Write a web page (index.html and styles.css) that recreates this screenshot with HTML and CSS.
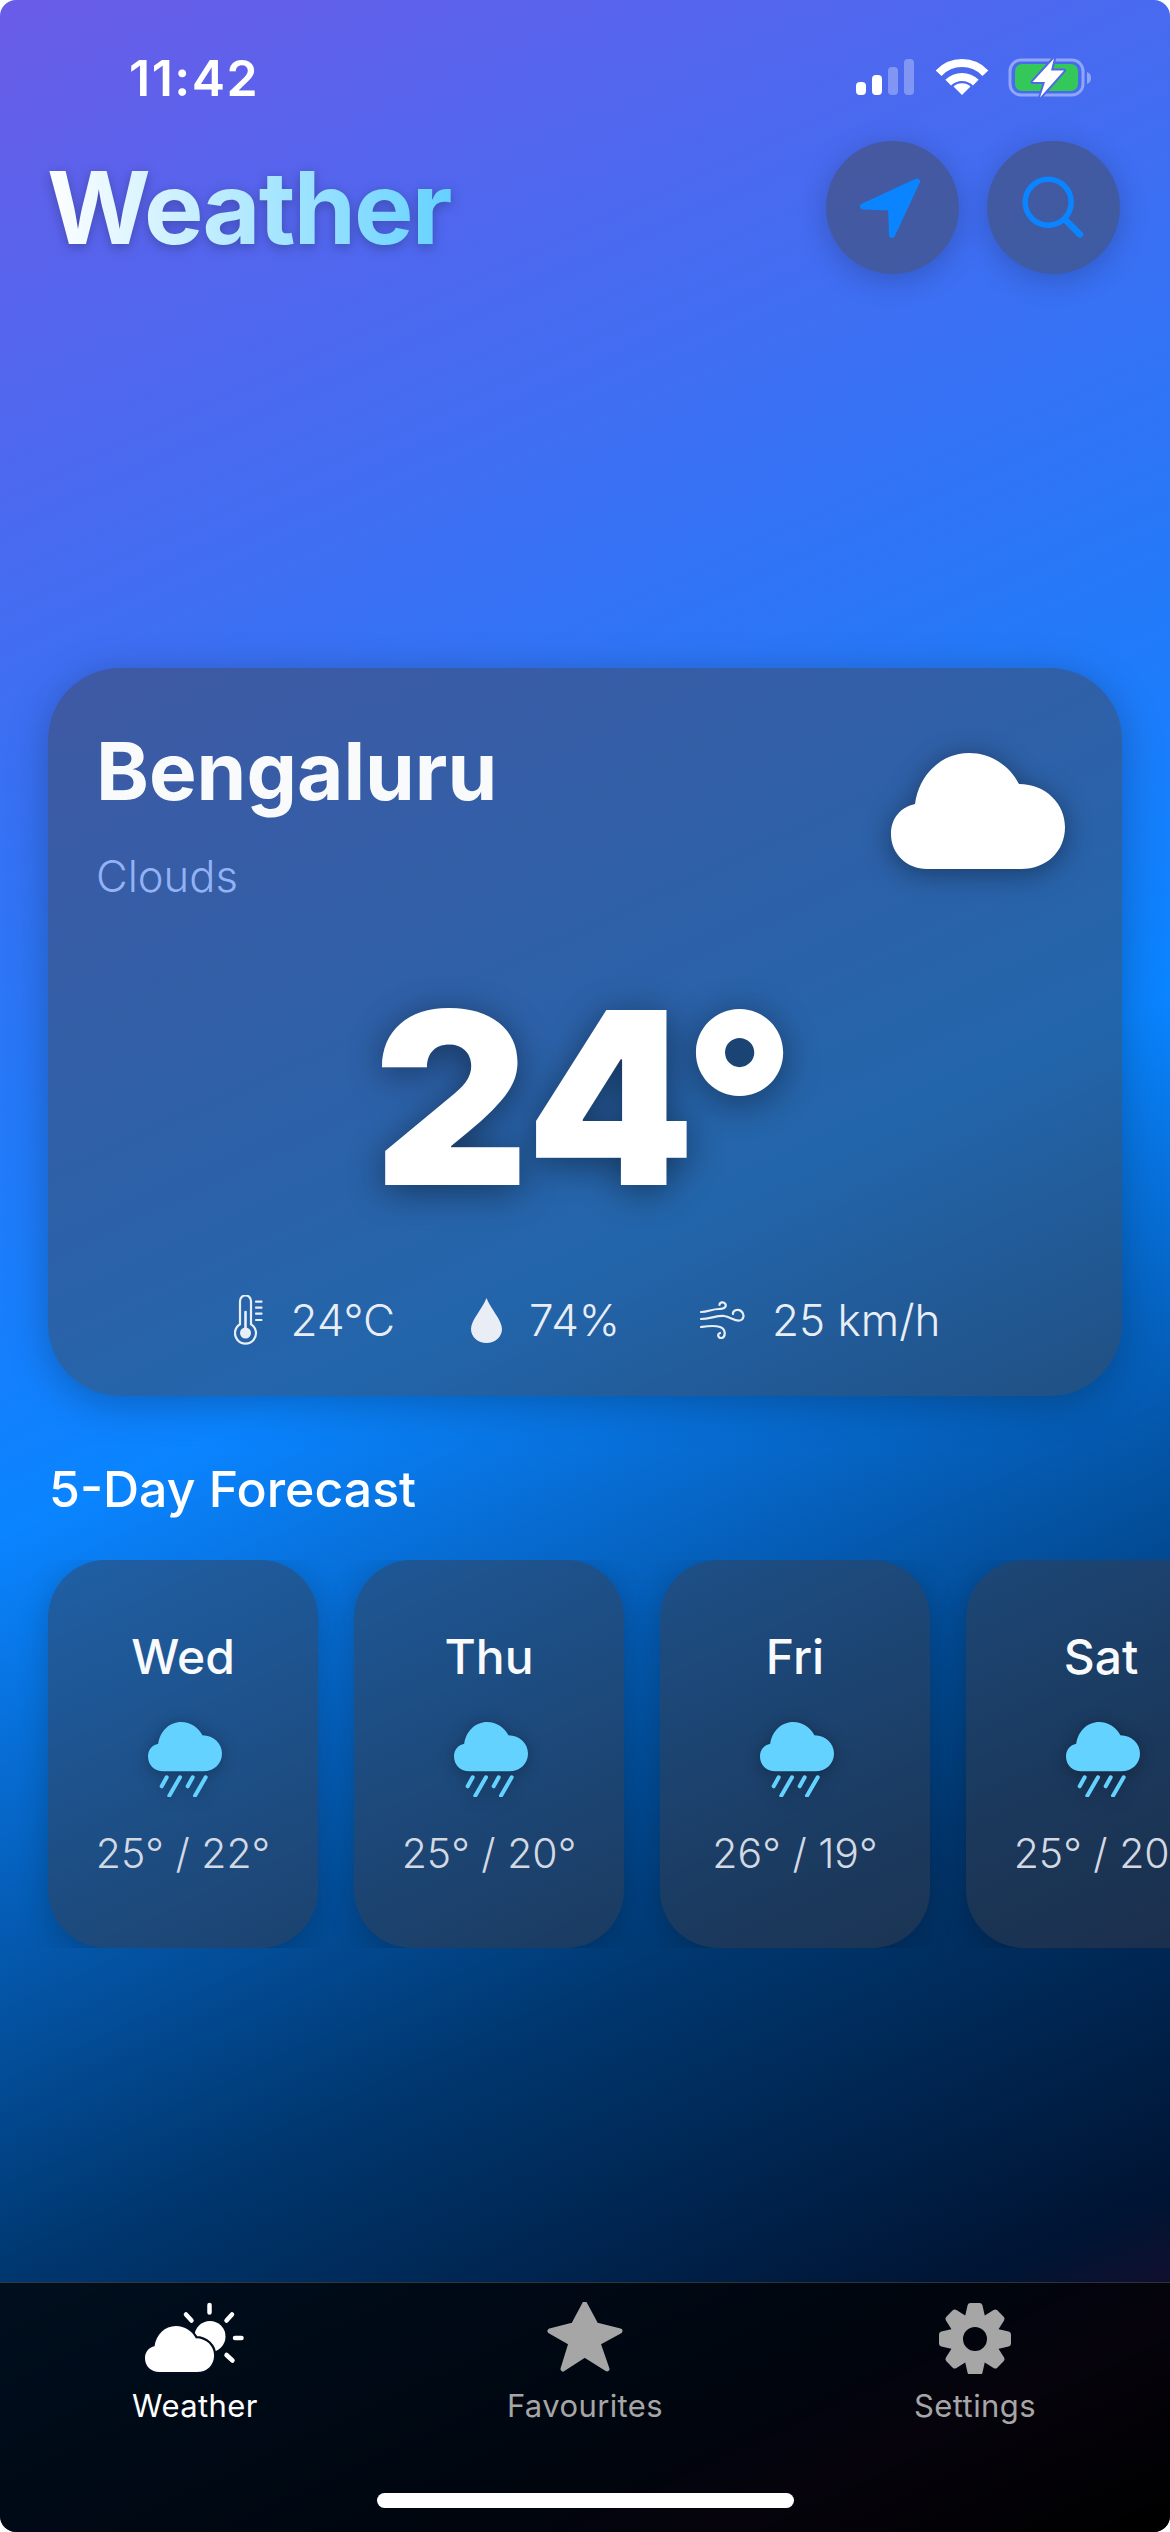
FILE: index.html
```html
<!DOCTYPE html>
<html lang="en">
<head>
    <meta charset="UTF-8" />
    <meta name="viewport" content="width=device-width, initial-scale=1.0" />
    <title>Weather</title>
    <link rel="stylesheet" href="styles.css">
</head>

<body>
<svg class="defs" width="0" height="0">
    <symbol id="cloud" viewBox="0 0 174 116">
        <path d="M36 116C16 116 0 101 0 81C0 65 10 54 24 51C28 22 50 0 78 0C100 0 119 13 128 31C155 31 174 51 174 74C174 98 156 116 130 116Z" />
    </symbol>
    <symbol id="rain" viewBox="0 0 74 75">
        <path class="rain-cloud" d="M15.3 49.3C6.8 49.3 0 42.9 0 34.4C0 27.6 4.3 23 10.2 21.7C11.9 9.4 21.3 0 33.2 0C42.5 0 50.6 5.5 54.4 13.2C65.9 13.2 74 21.7 74 31.5C74 41.7 66.3 49.3 55.3 49.3Z" />
        <path class="rain-drops" d="M18.7 55.3L13.7 64.3M32 55.3L21.3 73.7M44.7 55.3L39.7 64.3M57.7 55.3L47 73.7" />
    </symbol>
</svg>

<div class="screen">
    <div class="status">
        <span class="time">11:42</span>
        <svg class="status-icons" width="236" height="40" viewBox="0 0 236 40">
            <rect x="1" y="24" width="10" height="13" rx="4" fill="#fff" />
            <rect x="17" y="17" width="10" height="20" rx="4" fill="#fff" />
            <rect x="33" y="9" width="10" height="28" rx="4" fill="#fff" fill-opacity=".3" />
            <rect x="49" y="1" width="10" height="36" rx="4" fill="#fff" fill-opacity=".3" />
            <path d="M83.6 15.2A32 32 0 0 1 130.4 15.2" fill="none" stroke="#fff" stroke-width="8" />
            <path d="M93.2 24.6A19.5 19.5 0 0 1 120.8 24.6" fill="none" stroke="#fff" stroke-width="8" />
            <path d="M107 37L98.5 28.5A13 13 0 0 1 115.5 28.5Z" fill="#fff" />
            <rect x="155" y="2" width="73" height="35" rx="11" fill="none" stroke="#fff" stroke-opacity=".4" stroke-width="3" />
            <rect x="160" y="6" width="63" height="27" rx="7" fill="#34c759" />
            <path d="M232 14C235 15 236 17 236 20C236 23 235 25 232 26Z" fill="#fff" fill-opacity=".4" />
            <path d="M199 .5L177.5 24H190L185 39.5L209 12.5H196Z" fill="#fff" stroke="#4f68ea" stroke-width="4" stroke-linejoin="round" paint-order="stroke" />
        </svg>
    </div>

    <div class="header">
        <h1 class="title">Weather</h1>
        <div class="actions">
            <div class="round-btn">
                <svg width="70" height="70" viewBox="0 0 70 70">
                    <path d="M59 8.5L5 33.5L33 34.5L34 62Z" fill="#0a84ff" stroke="#0a84ff" stroke-width="6" stroke-linejoin="round" />
                </svg>
            </div>
            <div class="round-btn">
                <svg width="70" height="70" viewBox="0 0 70 70">
                    <circle cx="29.2" cy="29.2" r="23" fill="none" stroke="#0a84ff" stroke-width="5.5" />
                    <path d="M46 46.5L61 61.5" stroke="#0a84ff" stroke-width="6.5" stroke-linecap="round" />
                </svg>
            </div>
        </div>
    </div>

    <div class="card">
        <div class="card-head">
            <div>
                <div class="city">Bengaluru</div>
                <div class="condition">Clouds</div>
            </div>
            <svg class="big-cloud" width="174" height="116"><use href="#cloud" /></svg>
        </div>
        <div class="temp">24°</div>
        <div class="details">
            <div class="detail">
                <svg width="30" height="50" viewBox="0 0 30 50" fill="none" stroke="#e9eef6" stroke-width="2.2" stroke-linecap="round">
                    <path d="M6 6a5.5 5.5 0 0 1 11 0V29.2a10.5 10.5 0 1 1 -11 0Z" />
                    <path d="M11.5 17V38" stroke-width="2.6" />
                    <circle cx="11.5" cy="38" r="5.5" fill="#e9eef6" stroke="none" />
                    <path d="M22 6.7H27.5M22 12.7H27.5M22 18.7H27.5M22 25H27.5" />
                </svg>
                <span>24°C</span>
            </div>
            <div class="detail">
                <svg width="31" height="45" viewBox="0 0 31 45">
                    <path d="M15.5 0C19 10 31 22 31 31C31 39 24 45 15.5 45C7 45 0 39 0 31C0 22 12 10 15.5 0Z" fill="#e9eef6" />
                </svg>
                <span>74%</span>
            </div>
            <div class="detail wind">
                <svg width="45" height="38" viewBox="0 0 45 38" fill="none" stroke="#e9eef6" stroke-width="2.2" stroke-linecap="round">
                    <path d="M1 11C8 11 12 8 19 8C25 8 27 5 25 2.5C23.5 .5 19.5 1 19.5 4" />
                    <path d="M1 18C10 18 16 14.5 24 15C30 15.5 34 20 39.5 19.5C44 19 45 13 41 10C37.5 7.5 32.5 9.5 33 13" />
                    <path d="M1 26C8 25 14 24 20 26C26 28 26 36 21.5 37C18 37.5 17 33 20 32" />
                </svg>
                <span>25 km/h</span>
            </div>
        </div>
    </div>

    <h2 class="forecast-title">5-Day Forecast</h2>
    <div class="forecast">
        <div class="day">
            <div class="day-name">Wed</div>
            <svg class="day-icon" width="74" height="75"><use href="#rain" /></svg>
            <div class="day-temp">25° / 22°</div>
        </div>
        <div class="day">
            <div class="day-name">Thu</div>
            <svg class="day-icon" width="74" height="75"><use href="#rain" /></svg>
            <div class="day-temp">25° / 20°</div>
        </div>
        <div class="day">
            <div class="day-name">Fri</div>
            <svg class="day-icon" width="74" height="75"><use href="#rain" /></svg>
            <div class="day-temp">26° / 19°</div>
        </div>
        <div class="day">
            <div class="day-name">Sat</div>
            <svg class="day-icon" width="74" height="75"><use href="#rain" /></svg>
            <div class="day-temp">25° / 20°</div>
        </div>
    </div>

    <div class="tabbar">
        <div class="tabs">
            <div class="tab active">
                <svg width="100" height="72" viewBox="0 0 100 72">
                    <circle cx="65" cy="34.5" r="15.5" fill="#fff" />
                    <path d="M64.5 3V10.5M87 12.5L81.5 18.5M90 36H96.5M81.5 53L87.5 58.5M41 12.5L46.5 18.5" stroke="#fff" stroke-width="4.5" stroke-linecap="round" />
                    <path transform="translate(0 24) scale(.397)" d="M36 116C16 116 0 101 0 81C0 65 10 54 24 51C28 22 50 0 78 0C100 0 119 13 128 31C155 31 174 51 174 74C174 98 156 116 130 116Z" fill="#fff" stroke="#020e20" stroke-width="11" paint-order="stroke" />
                </svg>
                <span>Weather</span>
            </div>
            <div class="tab">
                <svg width="78" height="72" viewBox="0 2 78 72">
                    <path d="M38.7 4L50 25L74 31L52 43L61 69L38.7 55L17 69L25 43L4 31L27.5 25Z" fill="#a6a6a6" stroke="#a6a6a6" stroke-width="5" stroke-linejoin="round" />
                </svg>
                <span>Favourites</span>
            </div>
            <div class="tab">
                <svg width="72" height="72" viewBox="-36 -37 72 72">
                    <circle r="18.5" fill="none" stroke="#a6a6a6" stroke-width="13" />
                    <g fill="#a6a6a6" stroke="#a6a6a6" stroke-width="6" stroke-linejoin="round">
                        <path d="M-4.5 -33H4.5L7 -22H-7Z" />
                        <path transform="rotate(45)" d="M-4.5 -33H4.5L7 -22H-7Z" />
                        <path transform="rotate(90)" d="M-4.5 -33H4.5L7 -22H-7Z" />
                        <path transform="rotate(135)" d="M-4.5 -33H4.5L7 -22H-7Z" />
                        <path transform="rotate(180)" d="M-4.5 -33H4.5L7 -22H-7Z" />
                        <path transform="rotate(225)" d="M-4.5 -33H4.5L7 -22H-7Z" />
                        <path transform="rotate(270)" d="M-4.5 -33H4.5L7 -22H-7Z" />
                        <path transform="rotate(315)" d="M-4.5 -33H4.5L7 -22H-7Z" />
                    </g>
                </svg>
                <span>Settings</span>
            </div>
        </div>
        <div class="home-bar"></div>
    </div>
</div>
</body>
</html>
```

FILE: styles.css
```css
html {
    background: #fff;
}
body {
    margin: 0;
    font-family: Inter, "Noto Sans", sans-serif;
    color: #fff;
}
.defs {
    position: absolute;
}
.screen {
    width: 1170px;
    height: 2532px;
    display: flex;
    flex-direction: column;
    overflow: hidden;
    border-radius: 16px;
    background: linear-gradient(155deg, #6a5ce8 0%, #0a84ff 50%, #00376f 74%, #001433 89%, #170d2c 93%, #000 100%);
}

/* status bar */
.status {
    height: 141px;
    box-sizing: border-box;
    padding: 54px 79px 0 129px;
    display: flex;
    justify-content: space-between;
    align-items: flex-start;
}
.time {
    font-size: 50px;
    line-height: 48px;
    font-weight: 600;
    letter-spacing: 1.5px;
}
.status-icons {
    margin-top: 4px;
}

/* header */
.header {
    height: 133px;
    padding: 0 50px 0 47px;
    display: flex;
    justify-content: space-between;
    align-items: center;
}
.title {
    margin: 0;
    font-size: 100px;
    line-height: 120px;
    font-weight: 700;
    letter-spacing: -1.9px;
    background: linear-gradient(90deg, #fff, #64d2ff);
    -webkit-background-clip: text;
    background-clip: text;
    color: transparent;
    filter: drop-shadow(0 3px 6px rgba(0, 0, 0, .25));
}
.actions {
    display: flex;
    gap: 28px;
}
.round-btn {
    width: 133px;
    height: 133px;
    border-radius: 50%;
    display: flex;
    align-items: center;
    justify-content: center;
    background: rgba(68, 68, 68, .46);
    box-shadow: 0 6px 30px rgba(0, 0, 0, .2);
}

/* main card */
.card {
    margin: 394px 48px 0;
    padding: 53px 48px 46px;
    border-radius: 72px;
    background: rgba(66, 66, 72, .46);
    box-shadow: 0 8px 40px rgba(0, 0, 0, .25);
}
.card-head {
    display: flex;
    justify-content: space-between;
    align-items: flex-start;
}
.city {
    font-size: 80px;
    line-height: 100px;
    font-weight: 700;
    color: #f9fafc;
}
.condition {
    margin-top: 27px;
    font-size: 43.5px;
    line-height: 56px;
    font-weight: 300;
    color: #93b2f5;
}
.big-cloud {
    margin: 32px 9px 0 0;
    fill: #fff;
    filter: drop-shadow(0 4px 14px rgba(0, 0, 0, .4));
}
.temp {
    margin-top: 74px;
    text-align: center;
    font-size: 240px;
    line-height: 240px;
    font-weight: 900;
    letter-spacing: 1px;
    text-shadow: 0 6px 36px rgba(0, 0, 0, .45);
}
.details {
    margin-top: 72px;
    padding-left: 4px;
    height: 60px;
    display: flex;
    justify-content: center;
    align-items: center;
    gap: 76px;
    font-size: 44px;
    font-weight: 300;
    color: #e9eef6;
}
.detail {
    display: flex;
    align-items: center;
    gap: 27px;
}
.wind {
    margin-left: 4px;
}

/* forecast */
.forecast-title {
    margin: 63px 0 0 49px;
    font-size: 50px;
    line-height: 60px;
    font-weight: 500;
}
.forecast {
    margin-top: 41px;
    height: 388px;
    padding-left: 48px;
    display: flex;
    gap: 36px;
    overflow: hidden;
}
.day {
    flex: none;
    width: 270px;
    height: 388px;
    box-sizing: border-box;
    padding-top: 67px;
    display: flex;
    flex-direction: column;
    align-items: center;
    border-radius: 58px;
    background: rgba(58, 58, 70, .46);
    box-shadow: 0 6px 30px rgba(0, 0, 0, .2);
}
.day-name {
    font-size: 48px;
    line-height: 60px;
    font-weight: 500;
    color: #f9fafc;
}
.day-icon {
    margin: 35px 0 0 3px;
    filter: drop-shadow(0 2px 8px rgba(0, 0, 0, .3));
}
.rain-cloud {
    fill: #64d2ff;
}
.rain-drops {
    fill: none;
    stroke: #64d2ff;
    stroke-width: 4;
    stroke-linecap: round;
}
.day-temp {
    margin-top: 31px;
    font-size: 41px;
    line-height: 50px;
    font-weight: 300;
    white-space: nowrap;
    color: #d3d9e3;
}

/* tab bar */
.tabbar {
    margin-top: auto;
    height: 250px;
    box-sizing: border-box;
    border-top: 1px solid rgba(255, 255, 255, .18);
    background: rgba(0, 0, 0, .72);
    display: flex;
    flex-direction: column;
    align-items: center;
}
.tabs {
    width: 100%;
    display: grid;
    grid-template-columns: repeat(3, 1fr);
}
.tab {
    height: 150px;
    padding-top: 19px;
    box-sizing: border-box;
    display: flex;
    flex-direction: column;
    align-items: center;
    font-size: 31px;
    line-height: 36px;
    letter-spacing: .4px;
    color: #a6a6a6;
}
.tab svg {
    margin-bottom: 14px;
}
.tab.active {
    color: #fff;
}
.home-bar {
    margin-top: 60px;
    width: 417px;
    height: 15px;
    border-radius: 8px;
    background: #fff;
}
```
